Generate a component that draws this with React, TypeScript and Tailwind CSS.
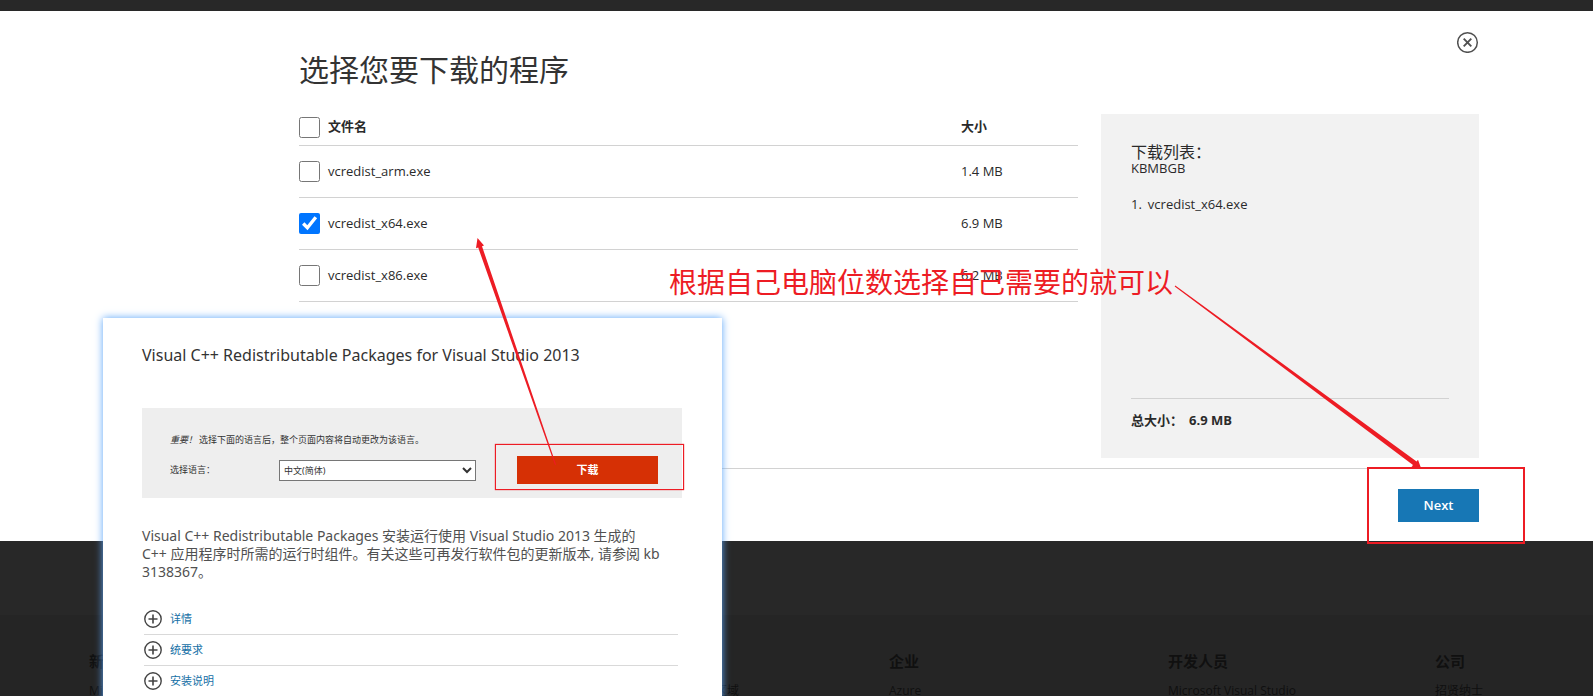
import { useState } from "react";

const files = [
  { name: "vcredist_arm.exe", size: "1.4 MB" },
  { name: "vcredist_x64.exe", size: "6.9 MB" },
  { name: "vcredist_x86.exe", size: "6.2 MB" },
];

const sections = ["详情", "统要求", "安装说明"];

const footerColumns = [
  { title: "新增内容", link: "Microsoft 365" },
  { title: "商店", link: "帐户" },
  { title: "教育", link: "Microsoft 教育版区域" },
  { title: "企业", link: "Azure" },
  { title: "开发人员", link: "Microsoft Visual Studio" },
  { title: "公司", link: "招贤纳士" },
];

function PlusIcon() {
  return (
    <svg className="size-[18px] shrink-0" viewBox="0 0 18 18" fill="none" stroke="#444" aria-hidden="true">
      <circle cx="9" cy="9" r="8.2" strokeWidth="1.4" />
      <path d="M9 4.5v9M4.5 9h9" strokeWidth="1.6" />
    </svg>
  );
}

function DownloadDialog() {
  const [checked, setChecked] = useState<string[]>(["vcredist_x64.exe"]);
  const toggle = (name: string) =>
    setChecked((c) => (c.includes(name) ? c.filter((n) => n !== name) : [...c, name]));
  const all = checked.length === files.length;

  return (
    <section className="bg-white pt-5 pr-[114px] pb-[19px] pl-[299px]">
      <div className="flex h-[83px] items-start justify-between">
        <h1 className="pt-4 text-[30px] leading-[46px] font-normal text-[#333]">选择您要下载的程序</h1>
        <button type="button" aria-label="关闭">
          <svg className="size-[22px]" viewBox="0 0 22 22" fill="none" stroke="#505050" aria-hidden="true">
            <circle cx="10.5" cy="11.5" r="9.8" strokeWidth="1.5" />
            <path d="M6.7 7.7l7.6 7.6M14.3 7.7l-7.6 7.6" strokeWidth="1.9" />
          </svg>
        </button>
      </div>
      <div className="flex items-start gap-[23px]">
        <table className="flex-1 border-collapse text-left text-[13px]">
          <thead>
            <tr className="h-[31px] border-b border-[#d2d2d2]">
              <th className="w-[29px] pb-1 align-middle">
                <input
                  type="checkbox"
                  aria-label="全选"
                  className="block size-[21px]"
                  checked={all}
                  onChange={() => setChecked(all ? [] : files.map((f) => f.name))}
                />
              </th>
              <th className="pb-1.5 font-bold">文件名</th>
              <th className="w-[117px] pb-1.5 font-bold">大小</th>
            </tr>
          </thead>
          <tbody>
            {files.map((f) => (
              <tr key={f.name} className="h-[52px] border-b border-[#d2d2d2]">
                <td>
                  <input
                    id={f.name}
                    type="checkbox"
                    className="block size-[21px]"
                    checked={checked.includes(f.name)}
                    onChange={() => toggle(f.name)}
                  />
                </td>
                <td className="pt-0.5">
                  <label htmlFor={f.name}>{f.name}</label>
                </td>
                <td className="pt-0.5">{f.size}</td>
              </tr>
            ))}
          </tbody>
        </table>
        <aside className="flex h-[344px] w-[378px] flex-col bg-[#f2f2f2] px-[30px] pt-[30px]">
          <h2 className="text-base leading-4 font-normal">下载列表：</h2>
          <p className="text-[13px] leading-4">KBMBGB</p>
          <ol className="mt-5 text-[13px] leading-4">
            {checked.map((name, i) => (
              <li key={name} className="flex gap-1.5">
                <span>{i + 1}.</span>
                <span>{name}</span>
              </li>
            ))}
          </ol>
          <div className="mt-auto flex h-[60px] gap-1.5 border-t border-[#d2d2d2] pt-[11px] text-[13px] leading-5 font-bold">
            <span>总大小：</span>
            <span>6.9 MB</span>
          </div>
        </aside>
      </div>
      <div className="mt-[10px] flex justify-end border-t border-[#d2d2d2] pt-5">
        <button type="button" className="h-[33px] w-[81px] bg-[#1777b5] text-[13px] font-semibold text-white">
          Next
        </button>
      </div>
    </section>
  );
}

function PackageCard() {
  return (
    <article className="absolute top-[318px] left-[103px] h-[500px] w-[619px] bg-white pr-10 pl-[39px] font-['Noto_Sans','Noto_Sans_CJK_SC',sans-serif] shadow-[0_0_8px_#5aa5f8]">
      <h2 className="pt-[25px] text-base leading-6 text-[#333]">
        Visual C++ Redistributable Packages for Visual Studio 2013
      </h2>
      <div className="mt-[41px] h-[90px] bg-[#eee] pt-6 pr-5 pl-7 text-[9px] text-[#333]">
        <p className="leading-4">
          <em className="pr-0.5">重要！</em>选择下面的语言后，整个页面内容将自动更改为该语言。
        </p>
        <div className="mt-2 flex h-7 items-center">
          <label htmlFor="language" className="w-[109px]">
            选择语言：
          </label>
          <select id="language" className="h-[21px] w-[197px] border border-[#767676] bg-white">
            <option>中文(简体)</option>
          </select>
          <button type="button" className="ml-[41px] h-7 w-[141px] bg-[#d63005] text-[11px] font-bold text-white">
            下载
          </button>
        </div>
      </div>
      <p className="mt-[29px] text-[14px] leading-[18px] text-[#505050]">
        Visual C++ Redistributable Packages 安装运行使用 Visual Studio 2013 生成的
        <br />
        C++ 应用程序时所需的运行时组件。有关这些可再发行软件包的更新版本, 请参阅 kb
        <br />
        3138367。
      </p>
      <ul className="mt-[23px] mr-1 ml-0.5">
        {sections.map((s) => (
          <li key={s} className="h-[31px] border-b border-[#d9d9d9] text-[11px] text-[#1570a6]">
            <button type="button" className="flex h-full items-center gap-2">
              <PlusIcon />
              {s}
            </button>
          </li>
        ))}
      </ul>
    </article>
  );
}

function Annotations() {
  return (
    <div className="pointer-events-none absolute inset-0 text-[#ed1c24]">
      <p className="absolute top-[262px] left-[669px] text-[28px] leading-10 whitespace-nowrap">
        根据自己电脑位数选择自己需要的就可以
      </p>
      <div className="absolute top-[444px] left-[495px] h-[46px] w-[189px] border border-[#ed1c24] shadow-[0_0_1px_#ed1c24]" />
      <div className="absolute top-[467px] left-[1367px] h-[77px] w-[158px] border-2 border-[#ed1c24]" />
      <svg className="absolute top-0 left-0 h-[696px] w-[1593px]" viewBox="0 0 1593 696" fill="currentColor" aria-hidden="true">
        <path d="M477.5 238 L484 245.5 L482 246.2 L556 464.5 L555 465 L478.2 247.6 L476 248.3 Z" />
        <path d="M1421 468 L1411.5 466.8 L1413 465 L1174.7 286.4 L1175.3 285.6 L1416.6 461.4 L1418 459.8 Z" />
      </svg>
    </div>
  );
}

export default function App() {
  return (
    <div className="relative h-screen overflow-hidden bg-[#282828] pt-[11px] font-['Open_Sans','Noto_Sans_CJK_SC',sans-serif] text-[#2a2a2a]">
      <DownloadDialog />
      <footer className="mt-[74px] grid h-40 grid-cols-[267px_267px_266px_279px_267px_1fr] bg-[#252525] pt-[34px] pl-[89px] text-[#101010]">
        {footerColumns.map((c) => (
          <div key={c.title}>
            <h3 className="text-[15px] leading-6 font-bold">{c.title}</h3>
            <a href="#" className="mt-2 block text-[12px] leading-5 whitespace-nowrap">
              {c.link}
            </a>
          </div>
        ))}
      </footer>
      <PackageCard />
      <Annotations />
    </div>
  );
}
